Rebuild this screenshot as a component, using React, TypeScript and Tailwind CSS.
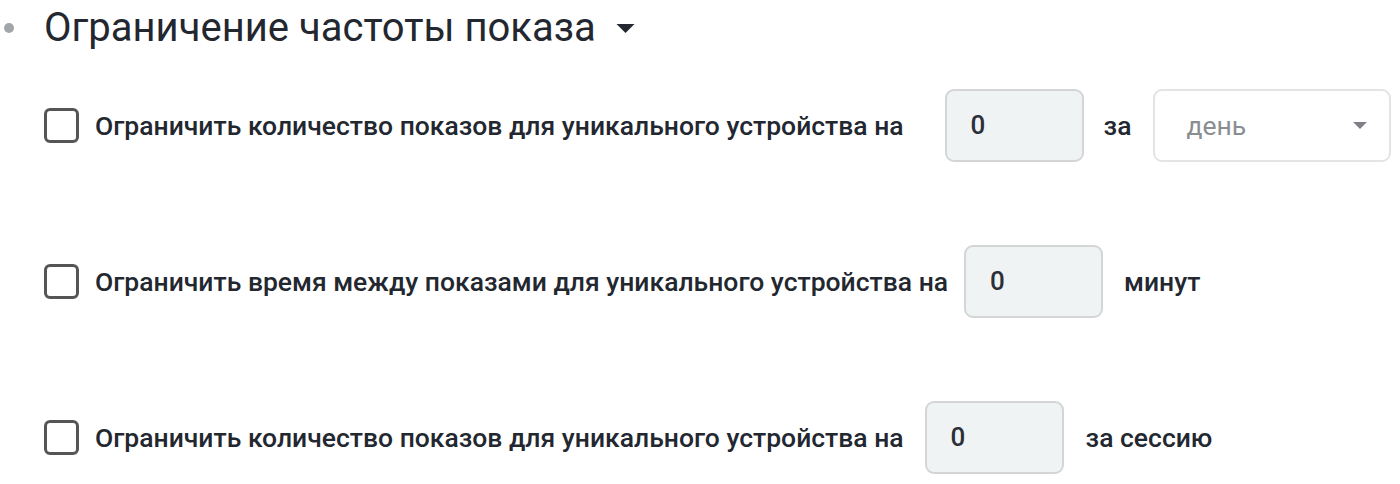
function Checkbox() {
  return <div className="size-[35px] shrink-0 rounded-[6px] border-[3px] border-[#555555] bg-white" />;
}

function NumberBox({ ml }: { ml: string }) {
  return (
    <div className={`${ml} flex h-[73px] w-[139px] shrink-0 items-center rounded-[9px] border-2 border-[#d3d5d6] bg-[#f0f3f4] pl-[24px] text-[26px] text-[#2b2f38]`}>
      0
    </div>
  );
}

function Caret({ className }: { className: string }) {
  return (
    <svg className={className} viewBox="0 0 20 10">
      <path d="M0 0 L20 0 L10 10 Z" fill="currentColor" />
    </svg>
  );
}

export default function App() {
  return (
    <div className="h-[484px] w-[1400px] bg-white font-['Roboto',sans-serif] text-[#23272f]">
      <div className="flex h-[55px] items-center">
        <div className="ml-[4px] size-[10px] rounded-full bg-[#a3a6a9]" />
        <h2 className="ml-[30px] text-[40px] leading-none">Ограничение частоты показа</h2>
        <Caret className="ml-[20px] mt-[2px] w-[19px] h-[9px] text-[#23272f]" />
      </div>

      <div className="ml-[44px] flex flex-col">
        <div className="mt-[34px] flex h-[73px] items-center text-[26.5px] font-medium">
          <Checkbox />
          <span className="ml-[16px]">Ограничить количество показов для уникального устройства на</span>
          <NumberBox ml="ml-[41px]" />
          <span className="ml-[20px]">за</span>
          <div className="ml-[22px] flex h-[73px] w-[238px] items-center justify-between rounded-[9px] border-2 border-[#e3e4e5] bg-white pl-[31px] pr-[22px] font-normal text-[#8a8d91]">
            день
            <Caret className="w-[14px] h-[7px] text-[#7d8084]" />
          </div>
        </div>

        <div className="mt-[83px] flex h-[73px] items-center text-[26.5px] font-medium">
          <Checkbox />
          <span className="ml-[16px]">Ограничить время между показами для уникального устройства на</span>
          <NumberBox ml="ml-[16px]" />
          <span className="ml-[21px]">минут</span>
        </div>

        <div className="mt-[83px] flex h-[73px] items-center text-[26.5px] font-medium">
          <Checkbox />
          <span className="ml-[16px]">Ограничить количество показов для уникального устройства на</span>
          <NumberBox ml="ml-[21px]" />
          <span className="ml-[22px]">за сессию</span>
        </div>
      </div>
    </div>
  );
}
